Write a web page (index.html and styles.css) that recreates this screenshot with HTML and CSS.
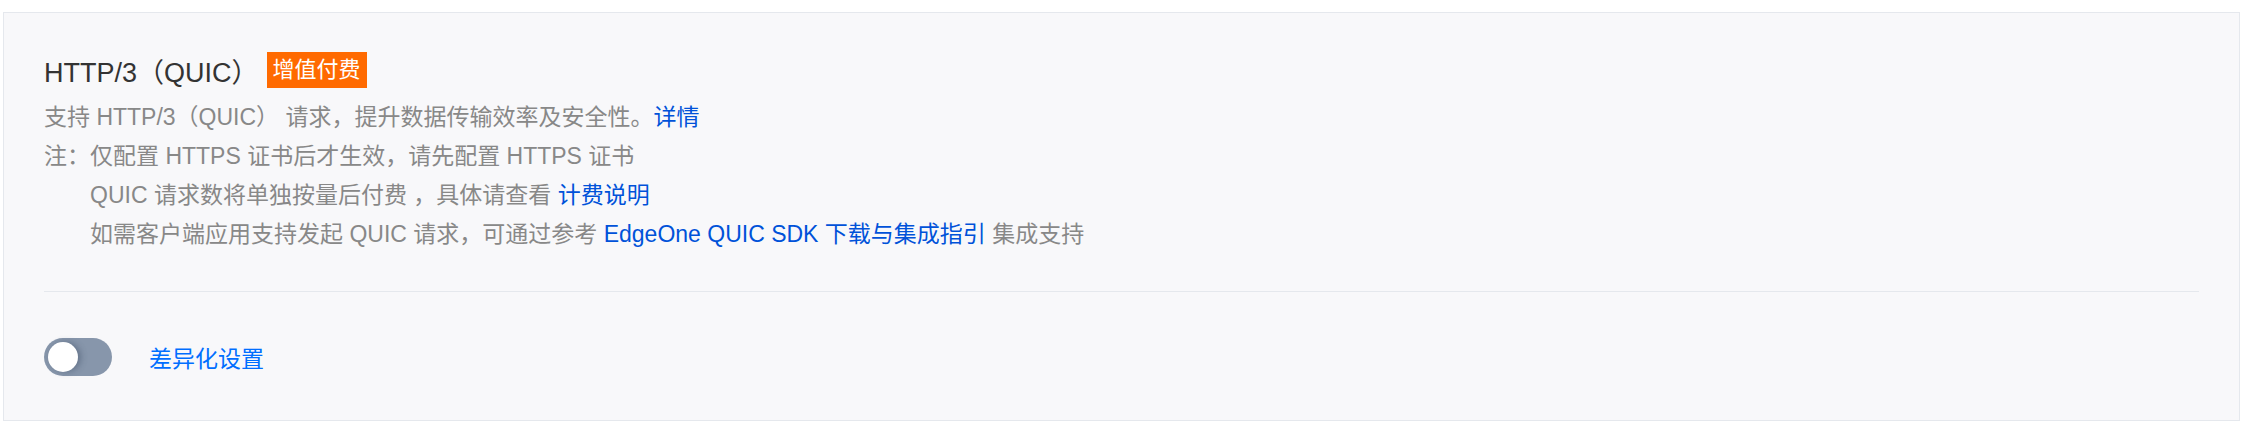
FILE: index.html
```html
<!DOCTYPE html>
<html lang="zh-CN">
<head>
    <meta charset="utf-8">
    <title>HTTP/3 (QUIC)</title>
    <link rel="stylesheet" href="styles.css">
</head>
<body>
    <div class="panel">
        <div class="head">
            <span class="title">HTTP/3（QUIC）</span>
            <span class="badge">增值付费</span>
        </div>
        <div class="desc">
            <p>支持 HTTP/3（QUIC） 请求，提升数据传输效率及安全性。<a href="#">详情</a></p>
            <div class="note">
                <span class="note-label">注：</span>
                <div class="note-body">
                    <p>仅配置 HTTPS 证书后才生效，请先配置 HTTPS 证书</p>
                    <p>QUIC 请求数将单独按量后付费 ，具体请查看 <a href="#">计费说明</a></p>
                    <p>如需客户端应用支持发起 QUIC 请求，可通过参考 <a href="#">EdgeOne QUIC SDK 下载与集成指引</a> 集成支持</p>
                </div>
            </div>
        </div>
        <hr class="divider">
        <div class="setting">
            <span class="switch"><span class="knob"></span></span>
            <a href="#" class="setting-link">差异化设置</a>
        </div>
    </div>
</body>
</html>
```

FILE: styles.css
```css
body{
    margin: 0;
    padding: 12px 11px 13px 3px;
    background-color: #fff;
    font-family: "Liberation Sans", "Noto Sans CJK SC", sans-serif;
}
.panel{
    background-color: #f8f8fa;
    border: 1px solid #e5e8ed;
    padding: 39px 40px 44px 40px;
}
.head{
    display: flex;
    align-items: center;
    height: 36px;
}
.title{
    font-size: 27px;
    color: #333;
}
.badge{
    margin-left: 8px;
    background-color: #ff6a00;
    color: #fff;
    font-size: 22px;
    line-height: 36px;
    padding: 0 6px;
}
.desc{
    margin-top: 10px;
    font-size: 23px;
    line-height: 39px;
    color: #888;
    text-spacing-trim: space-all;
}
.desc p{
    margin: 0;
}
.desc a{
    color: #0052d9;
    text-decoration: none;
}
.note{
    display: flex;
}
.divider{
    border: 0;
    border-top: 1px solid #e5e8ed;
    margin: 37px 0 46px 0;
}
.setting{
    display: flex;
    align-items: center;
}
.switch{
    display: inline-block;
    width: 68px;
    height: 38px;
    border-radius: 19px;
    background-color: #8796ab;
    position: relative;
}
.knob{
    position: absolute;
    left: 4px;
    top: 4px;
    width: 30px;
    height: 30px;
    border-radius: 50%;
    background-color: #fff;
    box-shadow: 3px 0 6px rgba(60, 75, 100, 0.45);
}
.setting-link{
    margin-left: 37px;
    font-size: 23px;
    color: #006eff;
    text-decoration: none;
}
```
